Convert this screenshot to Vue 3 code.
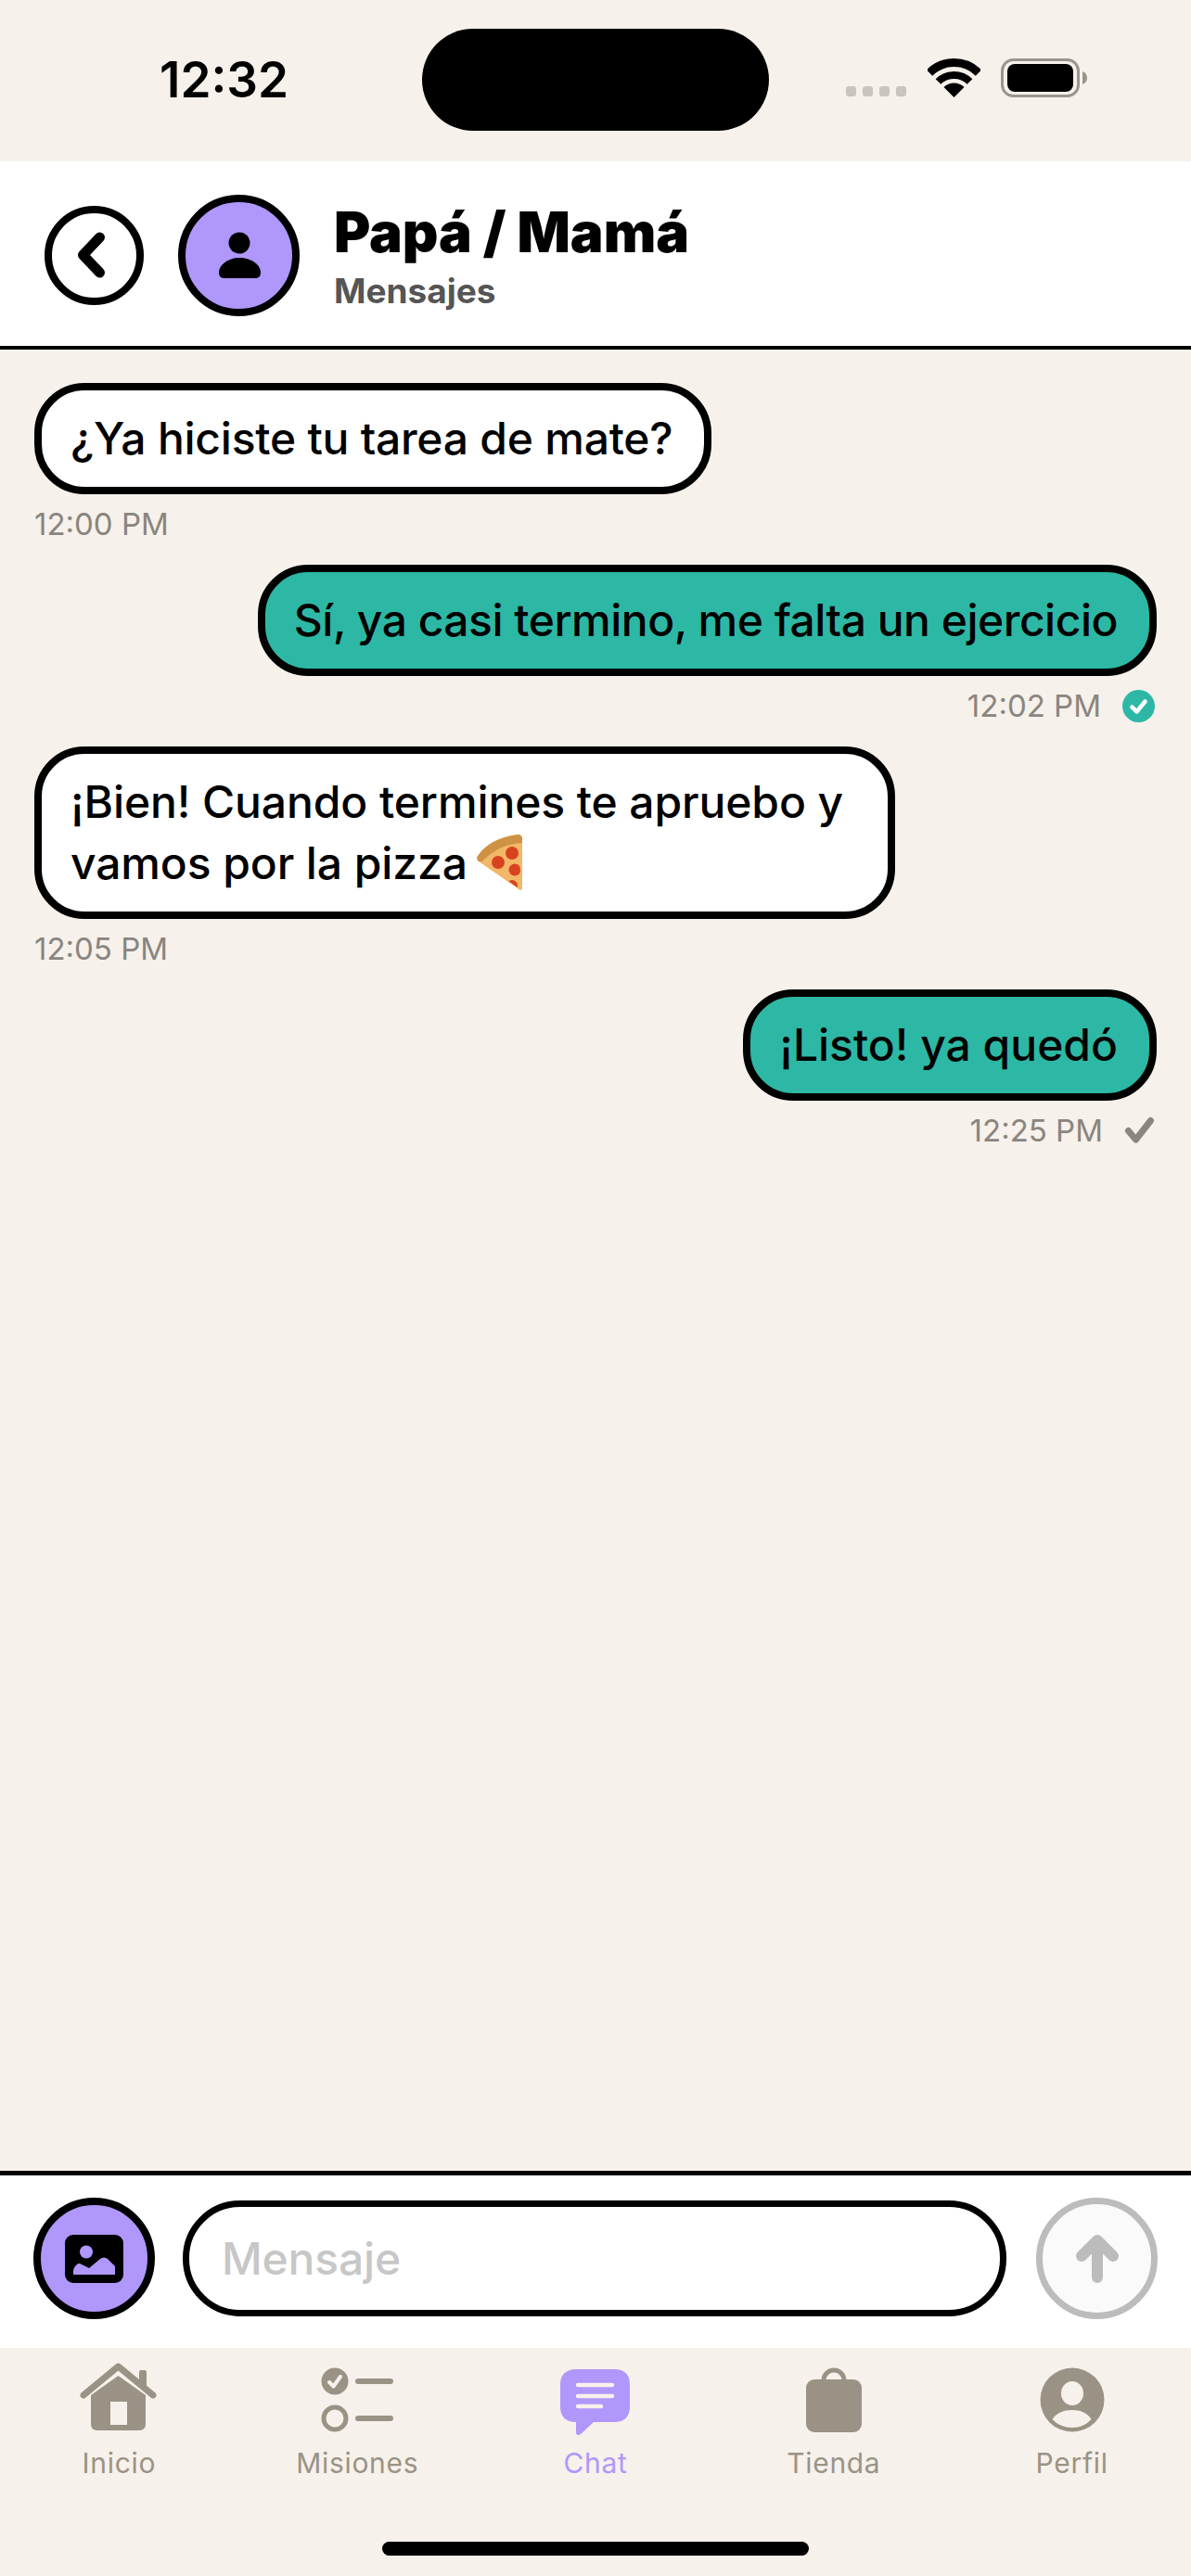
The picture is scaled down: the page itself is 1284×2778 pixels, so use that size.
<script setup>
const messages = [
  { id: 1, mine: false, lines: ['¿Ya hiciste tu tarea de mate?'], time: '12:00 PM', fit: 'tight' },
  { id: 2, mine: true, lines: ['Sí, ya casi termino, me falta un ejercicio'], time: '12:02 PM', status: 'read', fit: 'tighter' },
  { id: 3, mine: false, lines: ['¡Bien! Cuando termines te apruebo y', 'vamos por la pizza'], pizza: true, time: '12:05 PM', fit: 'wrapped' },
  { id: 4, mine: true, lines: ['¡Listo! ya quedó'], time: '12:25 PM', status: 'sent' }
]
</script>

<template>
  <div class="screen">
    <!-- Status bar -->
    <div class="status-bar">
      <span class="clock">12:32</span>
      <div class="island"></div>
      <div class="status-icons">
        <div class="signal">
          <i></i><i></i><i></i><i></i>
        </div>
        <svg class="wifi" width="57" height="42" viewBox="0 0 57 42">
          <path d="M2 15.5A37.5 37.5 0 0 1 55 15.5" fill="none" stroke="#000" stroke-width="9" />
          <path d="M11.5 25A24 24 0 0 1 45.5 25" fill="none" stroke="#000" stroke-width="8" />
          <path d="M28.5 42L17.5 31A15.5 15.5 0 0 1 39.5 31Z" fill="#000" />
        </svg>
        <svg class="battery" width="93" height="42" viewBox="0 0 93 42">
          <rect x="1.5" y="1.5" width="82" height="39" rx="12" fill="none" stroke="#9a958c" stroke-width="3" />
          <rect x="7" y="6" width="71" height="30" rx="8" fill="#000" />
          <path d="M88 14Q93 16 93 21Q93 26 88 28Z" fill="#9a958c" />
        </svg>
      </div>
    </div>

    <!-- Header -->
    <header class="chat-header">
      <button class="back-btn">
        <svg width="60" height="60" viewBox="0 0 60 60">
          <path d="M35.5 11L17.5 30L35.5 49" fill="none" stroke="#000" stroke-width="11" stroke-linecap="round" stroke-linejoin="round" />
        </svg>
      </button>
      <div class="avatar">
        <svg width="60" height="60" viewBox="0 0 60 60">
          <circle cx="30" cy="17" r="11.5" fill="#000" />
          <path d="M14 55H47Q53 55 53 49C53 40 42 33 30.5 33C19 33 8 40 8 49Q8 55 14 55Z" fill="#000" />
        </svg>
      </div>
      <div class="header-text">
        <h1 class="title">Papá / Mamá</h1>
        <p class="subtitle">Mensajes</p>
      </div>
    </header>

    <!-- Mensajes -->
    <main class="messages">
      <div
        v-for="msg in messages"
        :key="msg.id"
        class="message"
        :class="{ mine: msg.mine }"
      >
        <div class="bubble" :class="msg.fit">
          <template v-for="(line, i) in msg.lines" :key="i">
            <br v-if="i > 0" />{{ line }}
          </template>
          <svg v-if="msg.pizza" class="pizza" width="49" height="61" viewBox="0 0 49 61">
            <defs>
              <clipPath id="slice">
                <path d="M3 27L44 9L49 61Z" />
              </clipPath>
            </defs>
            <path d="M1 23Q14 4 44 0Q49 0 49 5L49 58Q48 62 44 58L2 29Q-1 26 1 23Z" fill="#f3b768" />
            <path d="M1 23Q14 4 44 0Q49 0 49 5L49 9Q24 10 6 29L2 29Q-1 26 1 23Z" fill="#cf9143" />
            <g clip-path="url(#slice)" fill="#d8431f">
              <circle cx="38" cy="20" r="7" />
              <circle cx="23" cy="30" r="7" />
              <circle cx="41" cy="38" r="6.5" />
              <circle cx="38" cy="55" r="6" />
            </g>
          </svg>
        </div>
        <div class="meta">
          <span class="time">{{ msg.time }}</span>
          <svg v-if="msg.status === 'read'" class="check-read" width="35" height="35" viewBox="0 0 35 35">
            <circle cx="17.5" cy="17.5" r="17.5" fill="#2db8a5" />
            <path d="M10.5 18.5L15.5 23.5L24.5 12.5" fill="none" stroke="#fff" stroke-width="4.5" stroke-linecap="round" stroke-linejoin="round" />
          </svg>
          <svg v-if="msg.status === 'sent'" class="check-sent" width="33" height="30" viewBox="0 0 33 30">
            <path d="M4.5 15.5L12.5 25L28.5 4.5" fill="none" stroke="#8a857e" stroke-width="7" stroke-linecap="round" stroke-linejoin="round" />
          </svg>
        </div>
      </div>
    </main>

    <!-- Zone de saisie -->
    <div class="composer">
      <button class="photo-btn">
        <svg width="63" height="52" viewBox="0 0 63 52">
          <rect width="63" height="52" rx="9" fill="#000" />
          <circle cx="23" cy="18.5" r="7" fill="#b097fb" />
          <path d="M9 43V39Q9 36 11 34L13 32Q15 30 18 32L26 36L38 26Q42 23 46 26L54 34V43Z" fill="#b097fb" />
        </svg>
      </button>
      <div class="input-box">Mensaje</div>
      <button class="send-btn">
        <svg width="60" height="60" viewBox="0 0 60 60">
          <path d="M30 11V50M13 27L30 10L47 27" fill="none" stroke="#bcbcbc" stroke-width="12" stroke-linecap="round" stroke-linejoin="round" />
        </svg>
      </button>
    </div>

    <!-- Barre d'onglets -->
    <nav class="tab-bar">
      <div class="tabs">
        <div class="tab">
          <svg width="84" height="80" viewBox="0 0 84 80">
            <rect x="64" y="8" width="8" height="20" rx="2" fill="#9a9385" />
            <path d="M4 35L41.5 4L79 35" fill="none" stroke="#9a9385" stroke-width="7" stroke-linecap="round" stroke-linejoin="round" />
            <path d="M12 35L41.5 14L71 35V66Q71 73 64 73H19Q12 73 12 66Z" fill="#9a9385" />
            <rect x="33" y="42" width="18" height="25" fill="#f6f1eb" />
          </svg>
          <span>Inicio</span>
        </div>
        <div class="tab">
          <svg width="80" height="80" viewBox="0 0 80 80">
            <circle cx="16" cy="20" r="14.5" fill="#9a9385" />
            <path d="M10 21L14.5 25.5L22 15" fill="none" stroke="#f6f1eb" stroke-width="4" stroke-linecap="round" stroke-linejoin="round" />
            <path d="M41 20H76M41 60H76" stroke="#9a9385" stroke-width="6" stroke-linecap="round" />
            <circle cx="16" cy="60" r="12" fill="none" stroke="#9a9385" stroke-width="5" />
          </svg>
          <span>Misiones</span>
        </div>
        <div class="tab active">
          <svg width="84" height="80" viewBox="0 0 84 80">
            <path d="M22 7H62Q79 7 79 24V47Q79 64 62 64H40L26 77Q21 80 21 74V64Q4 64 4 47V24Q4 7 22 7Z" fill="#b097fb" />
            <path d="M23 24H60M23 36H60M23 47H48" stroke="#f6f1eb" stroke-width="4.5" stroke-linecap="round" />
          </svg>
          <span>Chat</span>
        </div>
        <div class="tab">
          <svg width="80" height="80" viewBox="0 0 80 80">
            <path d="M29 19a11 11 0 0 1 22 0" fill="none" stroke="#9a9385" stroke-width="5" />
            <rect x="10" y="18" width="60" height="57" rx="9" fill="#9a9385" />
          </svg>
          <span>Tienda</span>
        </div>
        <div class="tab">
          <svg width="80" height="80" viewBox="0 0 80 80">
            <circle cx="40" cy="40" r="34.5" fill="#9a9385" />
            <ellipse cx="40" cy="33" rx="12" ry="13" fill="#f6f1eb" />
            <path d="M18.5 61C23 54 31 51 40 51C49 51 56 54 60.5 61C55 67 48 70 40 70C32 70 24 67 18.5 61Z" fill="#f6f1eb" />
          </svg>
          <span>Perfil</span>
        </div>
      </div>
      <div class="home-indicator"></div>
    </nav>
  </div>
</template>

<style>
html,
body {
  margin: 0;
  background: #f6f1eb;
}
</style>

<style scoped>
.screen {
  width: 1284px;
  height: 2778px;
  display: flex;
  flex-direction: column;
  background: #f6f1eb;
  font-family: Inter, "Liberation Sans", sans-serif;
  color: #000;
  overflow: hidden;
}

button {
  padding: 0;
  display: flex;
  align-items: center;
  justify-content: center;
  flex-shrink: 0;
  border-radius: 50%;
}

/* Status bar */
.status-bar {
  height: 174px;
  box-sizing: border-box;
  padding: 31px 0 0 172px;
  display: flex;
  align-items: flex-start;
  flex-shrink: 0;
}

.clock {
  width: 283px;
  margin-top: 25px;
  font-size: 53px;
  line-height: 60px;
  font-weight: 600;
}

.island {
  width: 374px;
  height: 110px;
  border-radius: 55px;
  background: #000;
}

.status-icons {
  margin: 32px 0 0 83px;
  display: flex;
  align-items: flex-start;
}

.signal {
  display: flex;
  gap: 7px;
  margin-top: 30px;
}

.signal i {
  width: 11px;
  height: 11px;
  border-radius: 3px;
  background: #c8c5bd;
}

.wifi {
  margin-left: 23px;
}

.battery {
  margin-left: 22px;
}

/* Header */
.chat-header {
  height: 203px;
  box-sizing: border-box;
  padding: 3px 0 0 48px;
  display: flex;
  align-items: center;
  flex-shrink: 0;
  background: #fff;
  border-bottom: 4px solid #000;
}

.back-btn {
  width: 107px;
  height: 107px;
  border: 8px solid #000;
  background: #fff;
}

.avatar {
  width: 131px;
  height: 131px;
  margin-left: 37px;
  box-sizing: border-box;
  border: 8px solid #000;
  border-radius: 50%;
  background: #b097fb;
  display: flex;
  align-items: center;
  justify-content: center;
  flex-shrink: 0;
}

.header-text {
  margin-left: 37px;
}

.title {
  margin: 0;
  font-size: 60px;
  line-height: 72px;
  font-weight: 900;
}

.subtitle {
  margin: 6px 0 0;
  font-size: 37px;
  line-height: 44px;
  font-weight: 700;
  color: #555;
}

/* Mensajes */
.messages {
  flex: 1;
  padding: 36px 37px 0;
  display: flex;
  flex-direction: column;
  align-items: flex-start;
}

.message {
  margin-bottom: 24px;
  display: flex;
  flex-direction: column;
  align-items: flex-start;
}

.message.mine {
  align-self: flex-end;
  align-items: flex-end;
}

.bubble {
  padding: 19px 34px 19px 31px;
  border: 8px solid #000;
  border-radius: 54px;
  background: #fff;
  font-size: 48px;
  line-height: 66px;
  font-weight: 450;
  white-space: nowrap;
}

.mine .bubble {
  background: #2db8a5;
}

/* Inter runs a little wider or narrower than the original face per line */
.bubble.tight {
  letter-spacing: -0.25px;
}

.bubble.tighter {
  letter-spacing: -0.5px;
}

.bubble.wrapped {
  padding-right: 48px;
  letter-spacing: -0.1px;
}

.pizza {
  margin-left: 10px;
  vertical-align: -13px;
}

.meta {
  margin-top: 12px;
  height: 40px;
  display: flex;
  align-items: center;
  gap: 23px;
}

.time {
  font-size: 33px;
  line-height: 40px;
  color: #8a857e;
}

.check-read,
.check-sent {
  margin-right: 2px;
}

/* Zone de saisie */
.composer {
  height: 191px;
  box-sizing: border-box;
  padding: 0 36px 7px;
  display: flex;
  align-items: center;
  flex-shrink: 0;
  background: #fff;
  border-top: 5px solid #000;
}

.photo-btn {
  width: 131px;
  height: 131px;
  border: 8px solid #000;
  background: #b097fb;
}

.input-box {
  flex: 1;
  height: 125px;
  margin: 0 32px 0 30px;
  box-sizing: border-box;
  padding: 0 35px;
  display: flex;
  align-items: center;
  border: 7px solid #000;
  border-radius: 62px;
  background: #fff;
  font-size: 48px;
  font-weight: 450;
  letter-spacing: -0.2px;
  color: #c7c7c7;
}

.send-btn {
  width: 131px;
  height: 131px;
  border: 7px solid #bcbcbc;
  background: #fafafa;
}

/* Barre d'onglets */
.tab-bar {
  height: 246px;
  box-sizing: border-box;
  padding-top: 16px;
  display: flex;
  flex-direction: column;
  align-items: center;
  flex-shrink: 0;
}

.tabs {
  width: 100%;
  display: grid;
  grid-template-columns: repeat(5, 1fr);
}

.tab {
  display: flex;
  flex-direction: column;
  align-items: center;
  gap: 8px;
  font-size: 30px;
  line-height: 40px;
  font-weight: 400;
  letter-spacing: 0.7px;
  color: #9a9385;
}

.tab.active {
  color: #b097fb;
}

.home-indicator {
  width: 460px;
  height: 15px;
  margin-top: auto;
  margin-bottom: 22px;
  border-radius: 8px;
  background: #000;
}
</style>
